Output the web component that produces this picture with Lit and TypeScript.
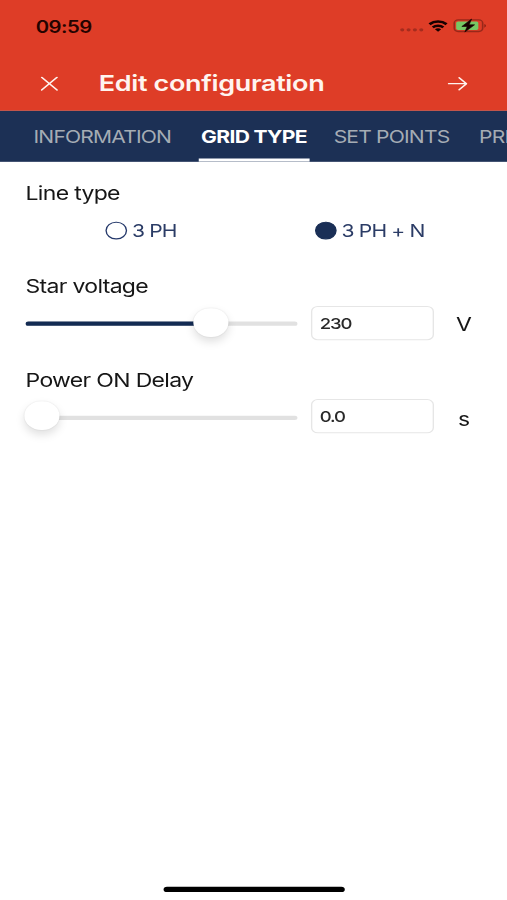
import { LitElement, html, css, svg } from "lit";
import { customElement, property, state } from "lit/decorators.js";
import { classMap } from "lit/directives/class-map.js";
import { styleMap } from "lit/directives/style-map.js";

interface Tab {
  label: string;
  kind: string;
}

@customElement("status-bar")
export class StatusBar extends LitElement {
  static styles = css`
    :host {
      display: flex;
      height: 46.8px;
      align-items: center;
      justify-content: space-between;
      padding: 0 15.4px 0 26.4px;
      box-sizing: border-box;
      color: #240300;
    }
    .time {
      font-size: 15px;
      font-weight: 600;
      letter-spacing: -0.35px;
      padding-top: 1.6px;
    }
    svg {
      display: block;
    }
  `;
  render() {
    return html`
      <span class="time">09:59</span>
      <svg width="66" height="14" viewBox="0 0 66 14">
        ${[3.5, 8.2, 12.9, 17.6].map(
          (x) => svg`<circle cx=${x} cy="10.9" r="1.5" fill="#a52c1e" />`
        )}
        <g fill="none" stroke="#160000" stroke-width="2.2">
          <path d="M23.7 5.9a9.4 9.4 0 0 1 12.6 0" />
          <path d="M26.1 8.7a5.9 5.9 0 0 1 7.8 0" />
        </g>
        <path d="M27.7 10.4a3.6 3.6 0 0 1 4.6 0L30 12.7z" fill="#160000" />
        <rect x="42" y="2" width="21" height="10.4" rx="2.8" fill="none" stroke="#97281a" stroke-width="1.2" />
        <path d="M64.3 5.6a1.9 1.9 0 0 1 0 3.4z" fill="#7d1d12" />
        <rect x="43.4" y="3.4" width="16.4" height="7.6" rx="1.4" fill="#76c864" />
        <path d="M54.8 1.2 47.6 7.9h4L49.8 12.9 57 6.4h-4z" fill="#160000" stroke="#160000" stroke-width="0.5" stroke-linejoin="round" />
      </svg>
    `;
  }
}

@customElement("title-bar")
export class TitleBar extends LitElement {
  static styles = css`
    :host {
      display: flex;
      height: 53.6px;
      align-items: center;
      padding: 2px 29px 0 30px;
      box-sizing: border-box;
      color: #fff4ef;
    }
    .title {
      flex: 1;
      margin-left: 30.1px;
      font-size: 20px;
      font-weight: 600;
      letter-spacing: -0.28px;
      white-space: nowrap;
    }
    svg {
      display: block;
      fill: none;
      stroke: currentColor;
      stroke-width: 1.25;
      stroke-linecap: round;
      stroke-linejoin: round;
      position: relative;
      top: 0.8px;
    }
  `;
  render() {
    return html`
      <svg width="13" height="13" viewBox="0 0 13 13"><path d="m.8.8 11.4 11.4M12.2.8.8 12.2" /></svg>
      <span class="title">Edit configuration</span>
      <svg width="15" height="13" viewBox="0 0 15 13"><path d="M.8 6.5h13.2M8.6 1.1 14 6.5l-5.4 5.4" /></svg>
    `;
  }
}

@customElement("tab-strip")
export class TabStrip extends LitElement {
  @property({ type: Number }) active = 1;
  @property({ attribute: false }) tabs: Tab[] = [];

  static styles = css`
    :host {
      display: flex;
      height: 45.2px;
      background: #1c3055;
      overflow: hidden;
      padding-left: 18.2px;
    }
    .tab {
      flex: none;
      box-sizing: border-box;
      height: 100%;
      line-height: 48px;
      font-size: 15.6px;
      letter-spacing: -0.61px;
      color: #a5acb4;
      white-space: nowrap;
      text-align: center;
      border-bottom: 3px solid transparent;
    }
    .information { width: 115px; margin-right: 14px; }
    .grid { width: 81.4px; margin-right: 12px; }
    .points { width: 98px; margin-right: 15.8px; }
    .active {
      color: #fff;
      font-weight: 700;
      letter-spacing: -0.5px;
      border-color: #fff;
    }
  `;
  render() {
    return this.tabs.map(
      (t, i) => html`<div class=${classMap({ tab: true, [t.kind]: true, active: i === this.active })}>${t.label}</div>`
    );
  }
}

@customElement("radio-option")
export class RadioOption extends LitElement {
  @property() label = "";
  @property({ type: Boolean }) checked = false;

  static styles = css`
    :host {
      display: flex;
      align-items: center;
      gap: 3.7px;
      color: #2b3c66;
      font-size: 15.6px;
      letter-spacing: -0.64px;
      white-space: nowrap;
    }
    .dot {
      box-sizing: border-box;
      width: 15.6px;
      height: 15.6px;
      border: 1.4px solid #24386a;
      border-radius: 50%;
    }
    .checked {
      background: #1a2f56;
      border-color: #1a2f56;
    }
  `;
  render() {
    return html`<span class=${classMap({ dot: true, checked: this.checked })}></span><span>${this.label}</span>`;
  }
}

@customElement("slider-field")
export class SliderField extends LitElement {
  @property() label = "";
  @property() value = "";
  @property() unit = "";
  @property({ type: Number }) ratio = 0;

  static styles = css`
    :host {
      display: block;
      height: 84.2px;
      color: #161616;
    }
    .label {
      height: 20px;
      line-height: 20px;
      margin-left: -0.5px;
      font-size: 17px;
      letter-spacing: -0.5px;
      white-space: nowrap;
    }
    .row {
      display: flex;
      align-items: center;
      height: 32px;
      margin-top: 7.1px;
    }
    .track {
      position: relative;
      top: 0.9px;
      width: 201px;
      height: 4px;
      border-radius: 2px;
      background: #e1e1e1;
    }
    .fill {
      height: 100%;
      border-radius: 2px;
      background: #132b53;
    }
    .thumb {
      position: absolute;
      top: -12.8px;
      width: 25.4px;
      height: 26.6px;
      margin-left: -12.7px;
      border-radius: 50%;
      background: #fff;
      box-shadow: 0 4px 8px rgba(0, 0, 0, 0.13), 0 0 1.5px rgba(0, 0, 0, 0.12);
    }
    .input {
      box-sizing: border-box;
      width: 91px;
      height: 31px;
      line-height: 30px;
      margin-left: 9.6px;
      padding-left: 5.6px;
      border: 1px solid #e6e6e6;
      border-radius: 5px;
      font-size: 13.7px;
      font-weight: 450;
      letter-spacing: -0.9px;
      color: #2a2a2a;
    }
    .unit {
      width: 44.4px;
      text-align: center;
      font-size: 17px;
      position: relative;
      top: 1.9px;
    }
  `;
  render() {
    const thumb = 11.7 + this.ratio * 178.2;
    return html`
      <div class="label">${this.label}</div>
      <div class="row">
        <div class="track">
          <div class="fill" style=${styleMap({ width: this.ratio ? `${thumb}px` : "0" })}></div>
          <div class="thumb" style=${styleMap({ left: `${thumb}px` })}></div>
        </div>
        <div class="input">${this.value}</div>
        <div class="unit">${this.unit}</div>
      </div>
    `;
  }
}

@customElement("app-root")
export class AppRoot extends LitElement {
  @state() private tabs: Tab[] = [
    { label: "INFORMATION", kind: "information" },
    { label: "GRID TYPE", kind: "grid" },
    { label: "SET POINTS", kind: "points" },
    { label: "PRI", kind: "next" },
  ];

  static styles = css`
    :host {
      display: block;
      width: 507px;
      height: 900px;
      overflow: hidden;
      background: #fff;
    }
    /* 375 x 812 point canvas stretched over the window */
    .screen {
      display: flex;
      flex-direction: column;
      width: 375px;
      height: 812px;
      transform: scale(1.352, 1.10837);
      transform-origin: 0 0;
      font-family: Inter, "Liberation Sans", sans-serif;
    }
    .head {
      background: #de3d27;
    }
    .body {
      flex: 1;
      padding: 18.6px 0 0 19.4px;
    }
    .label {
      height: 20px;
      line-height: 20px;
      margin-left: -0.5px;
      font-size: 17px;
      letter-spacing: -0.5px;
      color: #161616;
    }
    .options {
      display: grid;
      grid-template-columns: 155px 1fr;
      height: 24px;
      margin: 12px 0 28.2px;
      padding-left: 59px;
    }
    .home {
      align-self: center;
      width: 134px;
      height: 5px;
      margin-bottom: 7.2px;
      border-radius: 3px;
      background: #000;
    }
  `;
  render() {
    return html`
      <div class="screen">
        <div class="head">
          <status-bar></status-bar>
          <title-bar></title-bar>
        </div>
        <tab-strip .tabs=${this.tabs} .active=${1}></tab-strip>
        <div class="body">
          <div class="label">Line type</div>
          <div class="options">
            <radio-option label="3 PH"></radio-option>
            <radio-option label="3 PH + N" checked></radio-option>
          </div>
          <slider-field label="Star voltage" value="230" unit="V" .ratio=${0.7}></slider-field>
          <slider-field label="Power ON Delay" value="0.0" unit="s" .ratio=${0.0}></slider-field>
        </div>
        <div class="home"></div>
      </div>
    `;
  }
}
